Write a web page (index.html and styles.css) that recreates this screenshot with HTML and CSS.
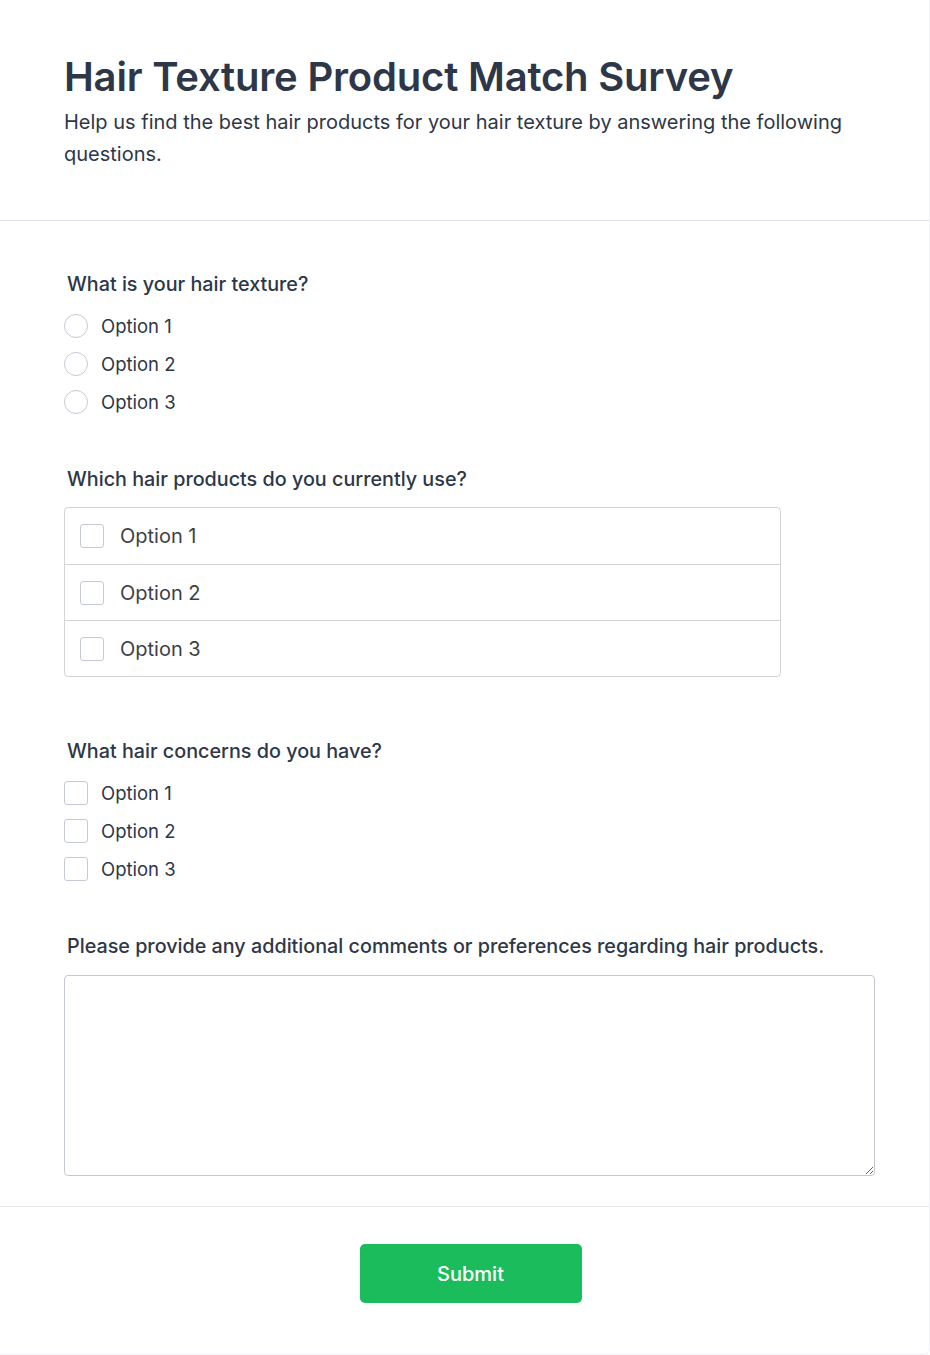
FILE: index.html
```html
<!DOCTYPE html>
<html lang="en">
<head>
<meta charset="utf-8">
<title>Hair Texture Product Match Survey</title>
<link rel="stylesheet" href="styles.css">
</head>
<body>
<div class="card">
  <header class="header">
    <h1 class="title">Hair Texture Product Match Survey</h1>
    <p class="desc">Help us find the best hair products for your hair texture by answering the following questions.</p>
  </header>
  <main class="body">
    <section class="q">
      <h2 class="q-title">What is your hair texture?</h2>
      <div class="opts">
        <label class="opt"><span class="radio"></span><span>Option 1</span></label>
        <label class="opt"><span class="radio"></span><span>Option 2</span></label>
        <label class="opt"><span class="radio"></span><span>Option 3</span></label>
      </div>
    </section>
    <section class="q">
      <h2 class="q-title">Which hair products do you currently use?</h2>
      <div class="list">
        <label class="list-row"><span class="box"></span><span>Option 1</span></label>
        <label class="list-row"><span class="box"></span><span>Option 2</span></label>
        <label class="list-row"><span class="box"></span><span>Option 3</span></label>
      </div>
    </section>
    <section class="q q-gap">
      <h2 class="q-title">What hair concerns do you have?</h2>
      <div class="opts">
        <label class="opt"><span class="box"></span><span>Option 1</span></label>
        <label class="opt"><span class="box"></span><span>Option 2</span></label>
        <label class="opt"><span class="box"></span><span>Option 3</span></label>
      </div>
    </section>
    <section class="q">
      <h2 class="q-title">Please provide any additional comments or preferences regarding hair products.</h2>
      <textarea class="ta"></textarea>
    </section>
  </main>
  <footer class="footer">
    <button class="submit">Submit</button>
  </footer>
</div>
</body>
</html>
```

FILE: styles.css
```css
* { box-sizing: border-box; }
html, body { margin: 0; padding: 0; background: #fff; }
body {
  font-family: Inter, "Noto Sans", sans-serif;
  color: #2d3748;
}
.card {
  width: 930px;
  height: 1355px;
  border: 1px solid #f0f1f8;
  border-left: none;
  border-top: none;
  border-radius: 0 0 6px 0;
}
.header {
  padding: 51px 64px 50px 64px;
  border-bottom: 1px solid #dfe0e8;
}
.title {
  margin: 0;
  font-size: 40px;
  line-height: 52px;
  font-weight: 600;
  color: #2d3748;
  letter-spacing: -0.2px;
}
.desc {
  margin: 3px 0 0 0;
  font-size: 20px;
  line-height: 32px;
  font-weight: 400;
  color: #2d3748;
}
.body {
  padding: 49px 54px 30px 64px;
  border-bottom: 1px solid #e8e9f0;
}
.q { margin-bottom: 51px; }
.q:last-child { margin-bottom: 0; }
.q-gap { margin-top: 60px; }
.q-title {
  margin: 0 0 16px 3px;
  font-size: 19.75px;
  line-height: 28px;
  font-weight: 500;
  color: #2d3748;
}
.opts { display: flex; flex-direction: column; gap: 14px; }
.opt {
  display: flex;
  align-items: center;
  gap: 13px;
  font-size: 18.5px;
  line-height: 24px;
  color: #2d3748;
}
.radio {
  width: 24px; height: 24px;
  border: 1px solid #c6cad6;
  border-radius: 50%;
  flex: none;
}
.box {
  width: 24px; height: 24px;
  border: 1px solid #c6cad6;
  border-radius: 3px;
  flex: none;
}
.list {
  width: 717px;
  border: 1px solid #d4d4d8;
  border-radius: 4px;
  margin-top: -2px;
}
.list-row {
  display: flex;
  align-items: center;
  gap: 16px;
  height: 56px;
  padding: 0 15px;
  font-size: 20px;
  color: #3f3f46;
  border-top: 1px solid #d4d4d8;
}
.list-row:first-child { border-top: none; }
.ta {
  display: block;
  width: 811px;
  height: 201px;
  margin-top: -1px;
  border: 1px solid #c4c8d4;
  border-radius: 4px;
  font-family: inherit;
  resize: vertical;
}
.footer {
  display: flex;
  justify-content: center;
  padding: 37px 0 0 12px;
}
.submit {
  width: 222px;
  height: 59px;
  background: #1abc5b;
  color: #fff;
  border: none;
  border-radius: 5px;
  font-family: inherit;
  font-size: 20px;
  font-weight: 500;
}
```
